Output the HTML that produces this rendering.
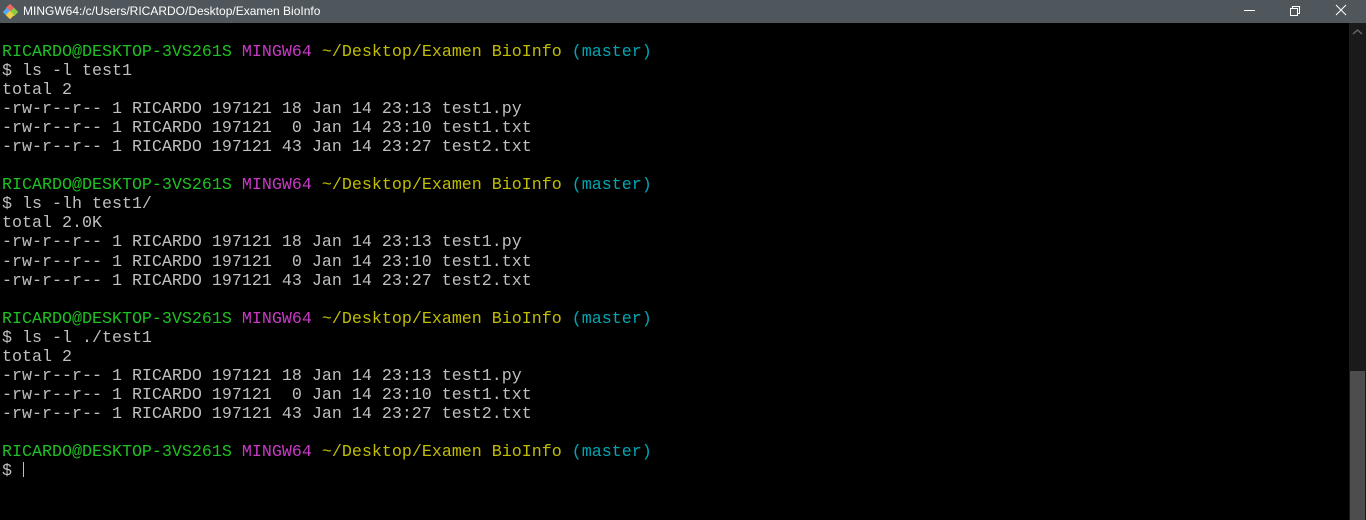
<!DOCTYPE html>
<html><head><style>
html,body{margin:0;padding:0;background:#000;width:1366px;height:520px;overflow:hidden}
.tb{position:absolute;left:0;top:0;width:1366px;height:23px;background:#4f575c;color:#fff;font:12px "Liberation Sans",sans-serif}
.tb .t{position:absolute;left:23px;top:4px}
.term{position:absolute;left:2px;top:43px;font:16.67px/19.05px "Liberation Mono",monospace;color:#bfbfbf;white-space:pre;margin:0}
.g{color:#1dc121}.m{color:#c839c5}.y{color:#c1bd00}.c{color:#00a6b2}
.sb{position:absolute;left:1349px;top:23px;width:17px;height:497px;background:#1a1a1a}
.th{position:absolute;left:1350px;top:371px;width:15px;height:149px;background:#4d4d4d}
.cur{display:inline-block;width:1px;height:15px;background:#bfbfbf;vertical-align:-2px;margin-left:1px}
</style></head><body>
<div class="tb">
<svg style="position:absolute;left:3px;top:4px" width="15" height="15" viewBox="0 0 15 15"><rect x="4" y="1" width="6" height="6" transform="rotate(45 7 4)" fill="#e66"/><rect x="1" y="5" width="6" height="6" transform="rotate(45 4 8)" fill="#5ae"/><rect x="8" y="5" width="6" height="6" transform="rotate(45 11 8)" fill="#8c4"/><rect x="4" y="8" width="6" height="6" transform="rotate(45 7 11)" fill="#ec4"/></svg>
<span class="t">MINGW64:/c/Users/RICARDO/Desktop/Examen BioInfo</span>
<svg style="position:absolute;left:1244px;top:4px" width="120" height="14"><line x1="0" y1="6.5" x2="11" y2="6.5" stroke="#fff"/><rect x="46.5" y="4.5" width="7" height="7" fill="none" stroke="#fff"/><path d="M48.5 4.5V2.5H55.5V9.5H53.5" fill="none" stroke="#fff"/><path d="M92 1L102 11M102 1L92 11" stroke="#fff"/></svg>
</div>
<pre class="term"><span class="g">RICARDO@DESKTOP-3VS261S</span> <span class="m">MINGW64</span> <span class="y">~/Desktop/Examen BioInfo</span> <span class="c">(master)</span>
$ ls -l test1
total 2
-rw-r--r-- 1 RICARDO 197121 18 Jan 14 23:13 test1.py
-rw-r--r-- 1 RICARDO 197121  0 Jan 14 23:10 test1.txt
-rw-r--r-- 1 RICARDO 197121 43 Jan 14 23:27 test2.txt

<span class="g">RICARDO@DESKTOP-3VS261S</span> <span class="m">MINGW64</span> <span class="y">~/Desktop/Examen BioInfo</span> <span class="c">(master)</span>
$ ls -lh test1/
total 2.0K
-rw-r--r-- 1 RICARDO 197121 18 Jan 14 23:13 test1.py
-rw-r--r-- 1 RICARDO 197121  0 Jan 14 23:10 test1.txt
-rw-r--r-- 1 RICARDO 197121 43 Jan 14 23:27 test2.txt

<span class="g">RICARDO@DESKTOP-3VS261S</span> <span class="m">MINGW64</span> <span class="y">~/Desktop/Examen BioInfo</span> <span class="c">(master)</span>
$ ls -l ./test1
total 2
-rw-r--r-- 1 RICARDO 197121 18 Jan 14 23:13 test1.py
-rw-r--r-- 1 RICARDO 197121  0 Jan 14 23:10 test1.txt
-rw-r--r-- 1 RICARDO 197121 43 Jan 14 23:27 test2.txt

<span class="g">RICARDO@DESKTOP-3VS261S</span> <span class="m">MINGW64</span> <span class="y">~/Desktop/Examen BioInfo</span> <span class="c">(master)</span>
$ <span class="cur"></span></pre>
<div class="sb"></div><div class="th"></div>
<svg style="position:absolute;left:1352px;top:28px" width="11" height="8"><path d="M1 6L5.5 2L10 6" fill="none" stroke="#666" stroke-width="1.5"/></svg>
</body></html>
